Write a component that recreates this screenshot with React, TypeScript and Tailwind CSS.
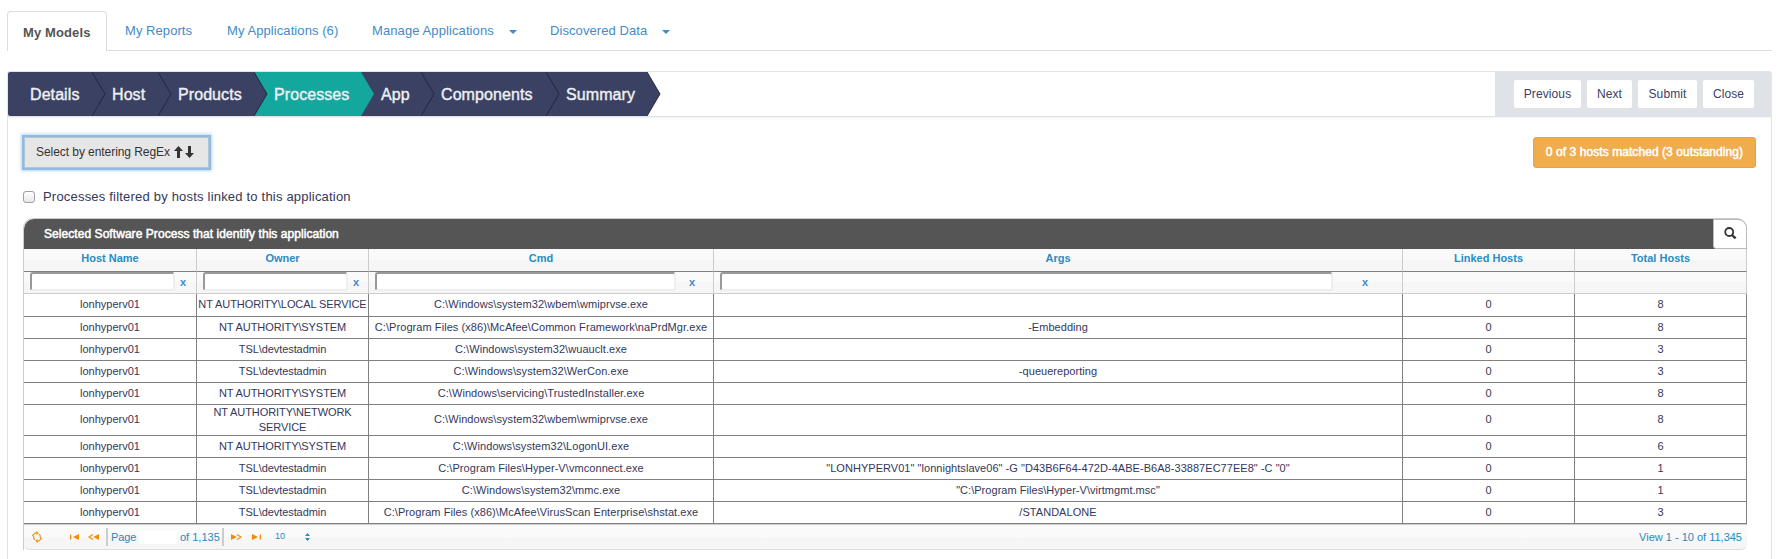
import React from 'react';

const COLS = 'grid grid-cols-[173px_172px_345px_689px_172px_172px]';

const steps = [
  { label: 'Details', box: 'w-[84px] pl-[22px]' },
  { label: 'Host', box: 'w-[66px] pl-[20px]' },
  { label: 'Products', box: 'w-[96px] pl-[20px]' },
  { label: 'Processes', box: 'w-[107px] pl-[20px]', active: true },
  { label: 'App', box: 'w-[60px] pl-[20px]' },
  { label: 'Components', box: 'w-[125px] pl-[20px]' },
  { label: 'Summary', box: 'w-[101px] pl-[20px]' },
];

const headers = ['Host Name', 'Owner', 'Cmd', 'Args', 'Linked Hosts', 'Total Hosts'];

const filters = [
  { input: 'w-[145px]', clear: 'ml-[5px]' },
  { input: 'w-[145px]', clear: 'ml-[5px]' },
  { input: 'w-[301px]', clear: 'ml-[13px]' },
  { input: 'w-[613px]', clear: 'ml-[29px]' },
];

const tracking = ['', 'tracking-[-0.08px]', 'tracking-[0.07px]', 'tracking-[0.04px]', '', ''];

const rows = [
  ['NT AUTHORITY\\LOCAL SERVICE', 'C:\\Windows\\system32\\wbem\\wmiprvse.exe', '', '8'],
  ['NT AUTHORITY\\SYSTEM', 'C:\\Program Files (x86)\\McAfee\\Common Framework\\naPrdMgr.exe', '-Embedding', '8'],
  ['TSL\\devtestadmin', 'C:\\Windows\\system32\\wuauclt.exe', '', '3'],
  ['TSL\\devtestadmin', 'C:\\Windows\\system32\\WerCon.exe', '-queuereporting', '3'],
  ['NT AUTHORITY\\SYSTEM', 'C:\\Windows\\servicing\\TrustedInstaller.exe', '', '8'],
  ['NT AUTHORITY\\NETWORK SERVICE', 'C:\\Windows\\system32\\wbem\\wmiprvse.exe', '', '8'],
  ['NT AUTHORITY\\SYSTEM', 'C:\\Windows\\system32\\LogonUI.exe', '', '6'],
  ['TSL\\devtestadmin', 'C:\\Program Files\\Hyper-V\\vmconnect.exe', '"LONHYPERV01" "lonnightslave06" -G "D43B6F64-472D-4ABE-B6A8-33887EC77EE8" -C "0"', '1'],
  ['TSL\\devtestadmin', 'C:\\Windows\\system32\\mmc.exe', '"C:\\Program Files\\Hyper-V\\virtmgmt.msc"', '1'],
  ['TSL\\devtestadmin', 'C:\\Program Files (x86)\\McAfee\\VirusScan Enterprise\\shstat.exe', '/STANDALONE', '3'],
];

function Caret() {
  return (
    <svg width="8" height="4" viewBox="0 0 8 4" className="mt-[3px] ml-[15px]" fill="#428bca">
      <path d="M0 0h8L4 4z" />
    </svg>
  );
}

function Tabs() {
  return (
    <nav className="flex h-10 w-[1765px] border-b border-[#dddddd] text-[13px] text-[#428bca]">
      <div className="flex h-10 w-[100px] items-center rounded-t-[4px] border border-b-0 border-[#dddddd] bg-white pt-[2px] pl-[15px] font-bold tracking-[0.12px] text-[#555555]">
        <span className="whitespace-nowrap">My Models</span>
      </div>
      <div className="flex h-[39px] w-[102px] items-center pl-[18px] tracking-[0.06px]">My Reports</div>
      <div className="flex h-[39px] w-[145px] items-center pl-[18px] tracking-[0.08px]">My Applications (6)</div>
      <div className="flex h-[39px] w-[178px] items-center pl-[18px] tracking-[0.1px]">
        <span>Manage Applications</span>
        <Caret />
      </div>
      <div className="flex h-[39px] items-center pl-[18px] tracking-[0.08px]">
        <span>Discovered Data</span>
        <Caret />
      </div>
    </nav>
  );
}

function Wizard() {
  return (
    <ol className="flex h-11 text-base text-[#eef0f2]">
      {steps.map((s, i) => (
        <li
          key={s.label}
          className={`relative flex items-center pt-px ${s.box} ${s.active ? 'bg-[#14a79d]' : 'bg-[#3a4162]'} ${i === 0 ? 'rounded-l-[2px]' : ''}`}
        >
          <span className="relative z-20 tracking-[0.08px] [-webkit-text-stroke:0.4px_#eef0f2]">{s.label}</span>
          <svg className="absolute top-0 left-full z-10" width="14" height="44" viewBox="0 0 14 44">
            <path d="M0 0L13 22L0 44z" fill={s.active ? '#14a79d' : '#3a4162'} />
            {!s.active && <path d="M0 0L13 22L0 44" fill="none" stroke="#23283d" strokeWidth="1" />}
          </svg>
        </li>
      ))}
    </ol>
  );
}

function ActionButton({ label, box }: { label: string; box: string }) {
  return (
    <button className={`h-7 rounded-[2px] bg-white text-center text-[12px] tracking-[0.1px] text-[#3a4162] ${box}`}>
      {label}
    </button>
  );
}

function Search() {
  return (
    <svg width="13" height="13" viewBox="0 0 13 13" fill="none" stroke="#333333">
      <circle cx="5.2" cy="5" r="4" strokeWidth="1.8" />
      <path d="M8 8l3.6 3.4" strokeWidth="2.4" />
    </svg>
  );
}

function Pager() {
  return (
    <div className="flex h-[25px] items-center rounded-b-[6px] border-b border-[#dddddd] bg-linear-to-b from-[#fafafa] from-50% to-[#f6f6f6] to-50% text-[11px] text-[#2a89bd]">
      <svg className="ml-2" width="10" height="12" viewBox="0 0 10 12" fill="none" stroke="#ef8c08" strokeWidth="1.1">
        <path d="M5 2H3.2L0.7 4.4l1.1 1.2v2L3 8.8M5 10h1.8L9.3 7.6L8.2 6.4v-2L7 3.2" />
        <path d="M4.4 0v4L6.8 2z M5.6 8v4L3.2 10z" fill="#ef8c08" stroke="none" />
      </svg>
      <svg className="ml-7" width="9" height="6" viewBox="0 0 9 6" fill="#ef8c08">
        <path d="M0 0.5h1.3v5H0zM9 0v6L3 3z" />
      </svg>
      <svg className="ml-[9px]" width="11" height="6" viewBox="0 0 11 6" fill="#ef8c08">
        <path d="M11 0v6L5.2 3z" />
        <path d="M5 0.5L1 3l4 2.5" fill="none" stroke="#ef8c08" strokeWidth="1.2" />
      </svg>
      <span className="ml-[7px] h-[18px] w-[2px] bg-[#cccccc]" />
      <span className="ml-[3px] w-7 tracking-[-0.1px]">Page</span>
      <span className="h-[13px] w-[38px] rounded-[3px] bg-white" />
      <span className="ml-[3px] w-[42px] whitespace-nowrap">of 1,135</span>
      <span className="h-[18px] w-[2px] bg-[#cccccc]" />
      <svg className="ml-[7px]" width="11" height="6" viewBox="0 0 11 6" fill="#ef8c08">
        <path d="M0 0v6L5.8 3z" />
        <path d="M6 0.5L10 3L6 5.5" fill="none" stroke="#ef8c08" strokeWidth="1.2" />
      </svg>
      <svg className="ml-[10px]" width="9" height="6" viewBox="0 0 9 6" fill="#ef8c08">
        <path d="M7.7 0.5H9v5H7.7zM0 0v6l6-3z" />
      </svg>
      <span className="ml-[14px] w-[30px] text-[9px]">10</span>
      <svg width="5" height="8" viewBox="0 0 5 8" fill="#2a89bd">
        <path d="M2.5 0L5 3H0zM2.5 8L0 5h5z" />
      </svg>
      <span className="mr-[5px] ml-auto">View 1 - 10 of 11,345</span>
    </div>
  );
}

function Grid() {
  return (
    <section className="mt-[11px] ml-[15px] w-[1724px] rounded-t-[10px] border-t border-l border-[#cccccc] text-[11px]">
      <header className="flex h-[30px] items-center rounded-t-[10px] bg-[#555555] pl-5 text-[12px] text-white">
        <span className="tracking-[0.06px] [-webkit-text-stroke:0.5px_white]">Selected Software Process that identify this application</span>
        <button className="ml-auto flex h-[30px] w-[34px] items-center justify-center rounded-tr-[9px] rounded-bl-[3px] border border-[#bbbbbb] bg-white pb-[2px]">
          <Search />
        </button>
      </header>
      <div className={`${COLS} h-[23px] bg-linear-to-b from-[#fafafa] from-50% to-[#f6f6f6] to-50%`}>
        {headers.map((h) => (
          <div key={h} className="flex justify-center border-r border-b border-r-[#cccccc] border-b-[#808080] pt-[3px] leading-[13px] font-bold text-[#2a8cc0]">
            {h}
          </div>
        ))}
      </div>
      <div className={`${COLS} h-[22px] border-b border-[#cccccc] bg-linear-to-b from-[#fafafa] from-50% to-[#f6f6f6] to-50%`}>
        {headers.map((h, i) => (
          <div key={h} className="flex items-start border-r border-[#cccccc] pl-[6px]">
            {filters[i] && (
              <>
                <span className={`h-[19px] rounded-[3px] border-2 border-t-[#999999] border-r-[#eeeeee] border-b-[#eeeeee] border-l-[#999999] bg-white ${filters[i].input}`} />
                <span className={`pt-[3px] leading-[14px] font-bold text-[#428bca] ${filters[i].clear}`}>x</span>
              </>
            )}
          </div>
        ))}
      </div>
      <div className="border-b border-[#cccccc] text-[#33375a]">
        {rows.map(([owner, cmd, args, total], i) => (
          <div key={i} className={`${COLS} ${i === 0 ? 'h-[23px]' : i === 5 ? 'h-[31px]' : 'h-[22px]'}`}>
            {['lonhyperv01', owner, cmd, args, '0', total].map((v, c) => (
              <div
                key={c}
                className={`flex items-center justify-center border-r border-b border-[#808080] text-center leading-[15px] ${tracking[c]} ${i === 5 && c === 1 ? 'px-[10px]' : 'pb-px whitespace-nowrap'}`}
              >
                {v}
              </div>
            ))}
          </div>
        ))}
      </div>
      <Pager />
    </section>
  );
}

export default function App() {
  return (
    <main className="h-[559px] overflow-hidden bg-white pt-[11px] pl-[7px] font-['Liberation_Sans',Arial,sans-serif]">
      <Tabs />
      <div className="mt-5 h-[500px] w-[1765px] rounded-t-[3px] border border-[#dfe2e7]">
        <div className="flex h-[45px] justify-between border-b border-[#dfe2e7] shadow-[0_1px_2px_#f0f0f2]">
          <Wizard />
          <div className="flex h-[45px] w-[276px] gap-[6px] bg-[#dfe2e7] pt-2 pl-[19px]">
            <ActionButton label="Previous" box="w-[67px]" />
            <ActionButton label="Next" box="w-[45px]" />
            <ActionButton label="Submit" box="w-[59px]" />
            <ActionButton label="Close" box="w-[51px]" />
          </div>
        </div>
        <div className="flex items-start justify-between pt-5 pr-[15px] pl-4">
          <button className="flex h-[31px] w-[185px] items-center border border-[#b4c4d0] bg-[#e6e6e6] pb-[2px] pl-[11px] text-[12px] tracking-[-0.06px] whitespace-nowrap text-[#333333] shadow-[0_0_0_2px_#8fbbe3,0_0_3px_3px_#b9d5ef]">
            Select by entering RegEx
            <svg className="ml-[4px]" width="20" height="12" viewBox="0 0 20 12" fill="#333333">
              <path d="M4.5 0L9 5H6v7H3V5H0zM15.5 12L11 7h3V0h3v7h3z" />
            </svg>
          </button>
          <button className="h-[31px] w-[223px] rounded-[3px] border border-[#eea236] bg-[#f0ad4e] pb-px text-center text-[12px] tracking-[0.07px] text-white [-webkit-text-stroke:0.5px_white]">
            0 of 3 hosts matched (3 outstanding)
          </button>
        </div>
        <label className="mt-[19px] ml-[15px] flex h-5 items-center text-[13px] tracking-[0.2px] text-[#33375a]">
          <span className="mr-[8px] h-3 w-3 rounded-[3px] border border-[#a0a0a0] bg-linear-to-b from-white to-[#e8e8e8]" />
          Processes filtered by hosts linked to this application
        </label>
        <Grid />
      </div>
    </main>
  );
}
